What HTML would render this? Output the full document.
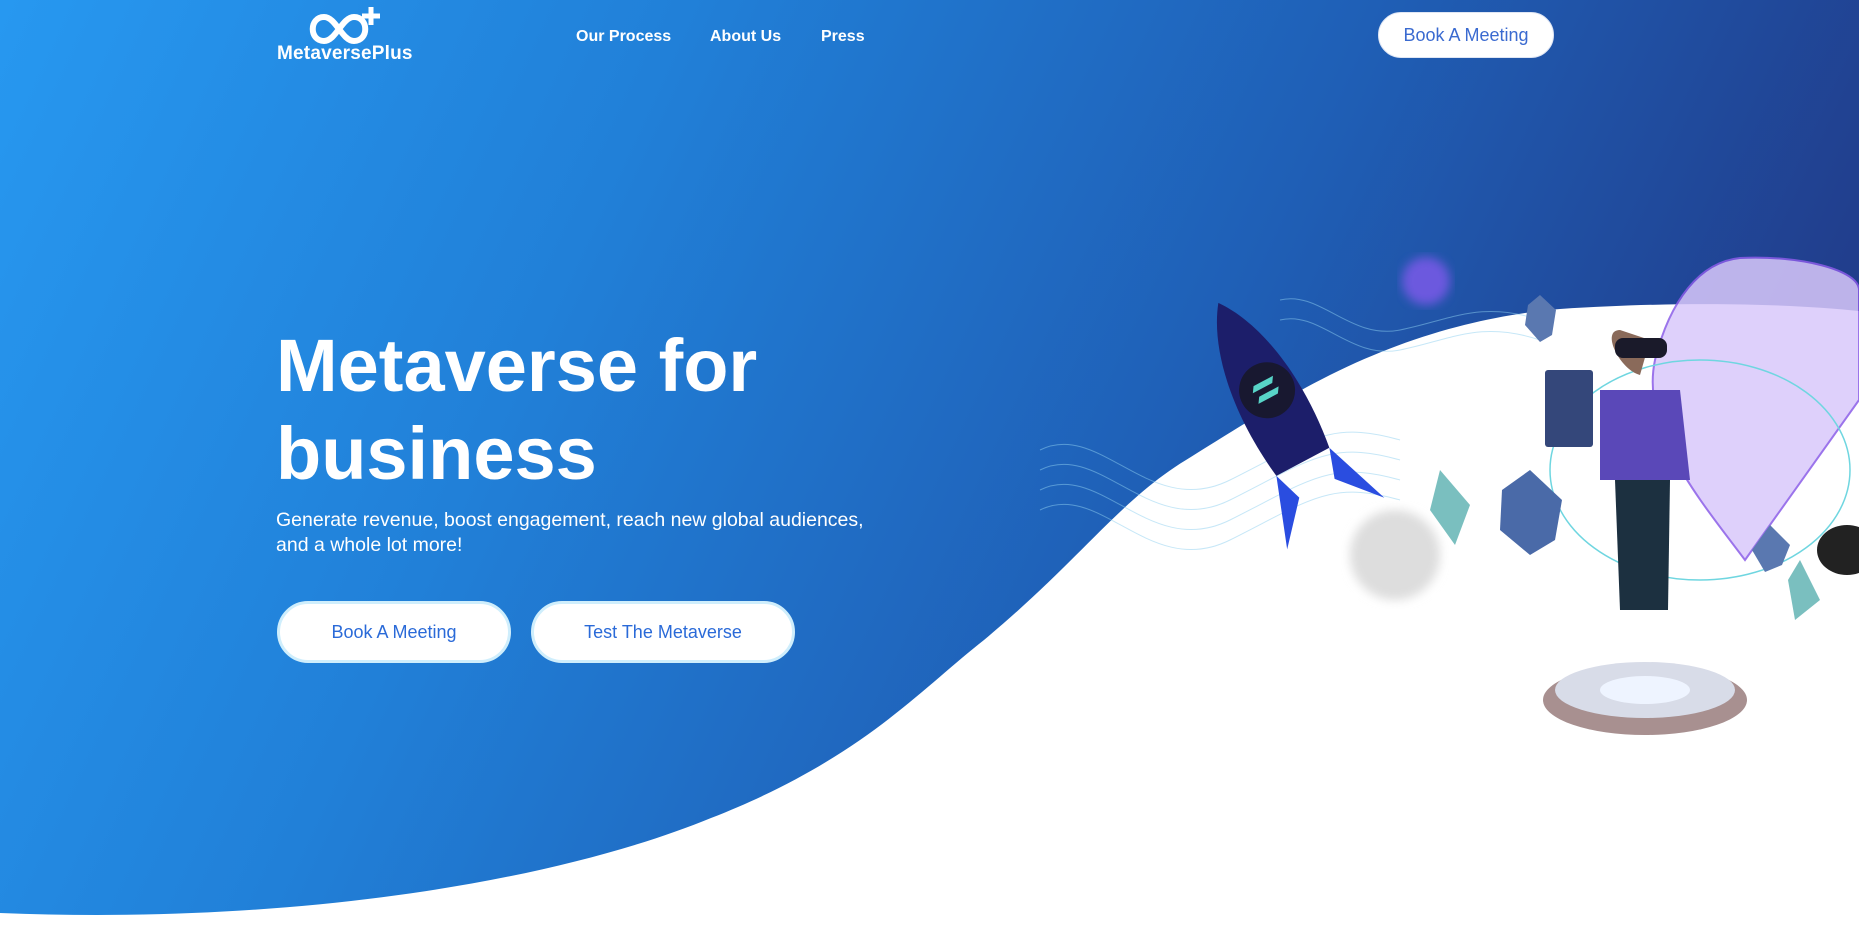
<!DOCTYPE html>
<html><head><meta charset="utf-8"><style>
*{margin:0;padding:0;box-sizing:border-box}
body{width:1859px;height:938px;overflow:hidden;background:#fff;font-family:"Liberation Sans",sans-serif;position:relative}
.bg{position:absolute;left:0;top:0;width:1859px;height:938px;background:linear-gradient(115deg,#2798f0 0%,#2180d8 30%,#1f5fb6 60%,#213f8e 85%,#232f7a 100%)}
svg.w{position:absolute;left:0;top:0}
.nav a{position:absolute;top:28px;color:#fff;font-weight:bold;font-size:16px;text-decoration:none}
.btn{position:absolute;background:#fff;border-radius:32px;color:#2a6ad8;font-size:18px;display:flex;align-items:center;justify-content:center;border:3px solid #cfeefc}
h1{position:absolute;left:276px;top:322px;color:#fff;font-size:74px;line-height:88px;font-weight:bold}
p.sub{position:absolute;left:276px;top:508px;color:#fff;font-size:19.5px;line-height:25px}
</style></head><body>
<div class="bg"></div>
<svg class="w" width="1859" height="938" viewBox="0 0 1859 938">
<defs><filter id="b"><feGaussianBlur stdDeviation="5"/></filter></defs>
<path d="M0 913 C300 925 560 880 711 818 C860 760 920 690 984 640 C1080 560 1120 500 1186 460 C1250 420 1290 395 1330 375 C1420 330 1500 314 1560 309 C1700 300 1800 305 1859 311 L1859 938 L0 938 Z" fill="#fff"/>
<g fill="none" stroke="#8fd0f0" stroke-width="1" opacity=".5">
<path d="M1040 450 C1100 420 1150 520 1230 480 S1330 420 1400 440"/><path d="M1040 470 C1100 440 1150 540 1230 500 S1330 440 1400 460"/><path d="M1040 490 C1100 460 1150 560 1230 520 S1330 460 1400 480"/><path d="M1040 510 C1100 480 1150 580 1230 540 S1330 480 1400 500"/>
<path d="M1280 300 C1320 290 1350 340 1400 330 S1480 300 1540 320"/><path d="M1280 320 C1320 310 1350 360 1400 350 S1480 320 1540 340"/>
</g>
<circle cx="1426" cy="281" r="24" fill="#7a5ae8" opacity=".85" filter="url(#b)"/>
<path d="M1740 258 C1800 255 1859 270 1859 290 L1859 400 L1745 560 C1700 500 1640 430 1655 360 C1670 300 1700 262 1740 258Z" fill="#d9c8fb" stroke="#8a5ce8" stroke-width="2" opacity=".85"/>
<ellipse cx="1700" cy="470" rx="150" ry="110" fill="none" stroke="#6fd6e0" stroke-width="1.5"/>
<g transform="rotate(-28 1270 400)">
<path d="M1270 290 C1240 330 1230 400 1240 470 L1300 470 C1310 400 1300 330 1270 290Z" fill="#1c1e6a"/>
<circle cx="1272" cy="390" r="28" fill="#181830"/><path d="M1262 380h22l-4 6h-22zM1262 392h22l-4 6h-22z" fill="#58d4c8"/>
<path d="M1240 470 L1215 540 L1250 500Z M1300 470 L1325 540 L1290 500Z" fill="#2a4de0"/>
</g>
<ellipse cx="1395" cy="555" rx="45" ry="45" fill="#ddd" filter="url(#b)"/>
<path d="M1440 470 L1470 505 L1455 545 L1430 510Z" fill="#7abfbf"/>
<path d="M1530 470 L1562 500 L1555 540 L1530 555 L1500 530 L1502 490Z" fill="#4a6aa8"/>
<path d="M1540 295 L1556 310 L1552 335 L1540 342 L1525 325 L1528 305Z" fill="#5a78b0"/>
<path d="M1770 525 L1790 545 L1782 565 L1765 572 L1752 550Z" fill="#5a78b0"/>
<path d="M1800 560 L1820 600 L1795 620 L1788 580Z" fill="#7abfbf"/>
<ellipse cx="1847" cy="550" rx="30" ry="25" fill="#222"/>
<rect x="1545" y="370" width="48" height="77" rx="3" fill="#34477a"/>
<path d="M1620 330 C1600 330 1620 370 1640 375 L1650 340Z" fill="#8a6a5a"/>
<rect x="1615" y="338" width="52" height="20" rx="8" fill="#1a1a2a"/>
<path d="M1600 390 L1680 390 L1690 480 L1600 480Z" fill="#5a48b8"/>
<path d="M1615 480 L1670 480 L1668 610 L1620 610Z" fill="#1c3040"/>
<ellipse cx="1645" cy="700" rx="102" ry="35" fill="#a89090"/>
<ellipse cx="1645" cy="690" rx="90" ry="28" fill="#d8dce8"/>
<ellipse cx="1645" cy="690" rx="45" ry="14" fill="#eef4ff"/>
</svg>
<svg style="position:absolute;left:308px;top:5px" width="72" height="42" viewBox="0 0 72 42"><path d="M16 36 C1 36 1 12 16 12 C28 12 34 36 46 36 C61 36 61 12 46 12 C34 12 28 36 16 36Z" fill="none" stroke="#fff" stroke-width="6"/><path d="M63 2v18M54 11h18" stroke="#fff" stroke-width="5"/></svg>
<div style="position:absolute;left:277px;top:43px;color:#fff;font-weight:bold;font-size:19px;letter-spacing:.2px">MetaversePlus</div>
<div class="nav"><a style="left:576px">Our Process</a><a style="left:710px">About Us</a><a style="left:821px">Press</a></div>
<div class="btn" style="left:1378px;top:12px;width:176px;height:46px;border:1px solid #dfe6f4;font-size:18px;color:#3a6ad0">Book A Meeting</div>
<h1>Metaverse for<br>business</h1>
<p class="sub">Generate revenue, boost engagement, reach new global audiences,<br>and a whole lot more!</p>
<div class="btn" style="left:277px;top:601px;width:234px;height:62px">Book A Meeting</div>
<div class="btn" style="left:531px;top:601px;width:264px;height:62px">Test The Metaverse</div>
</body></html>
